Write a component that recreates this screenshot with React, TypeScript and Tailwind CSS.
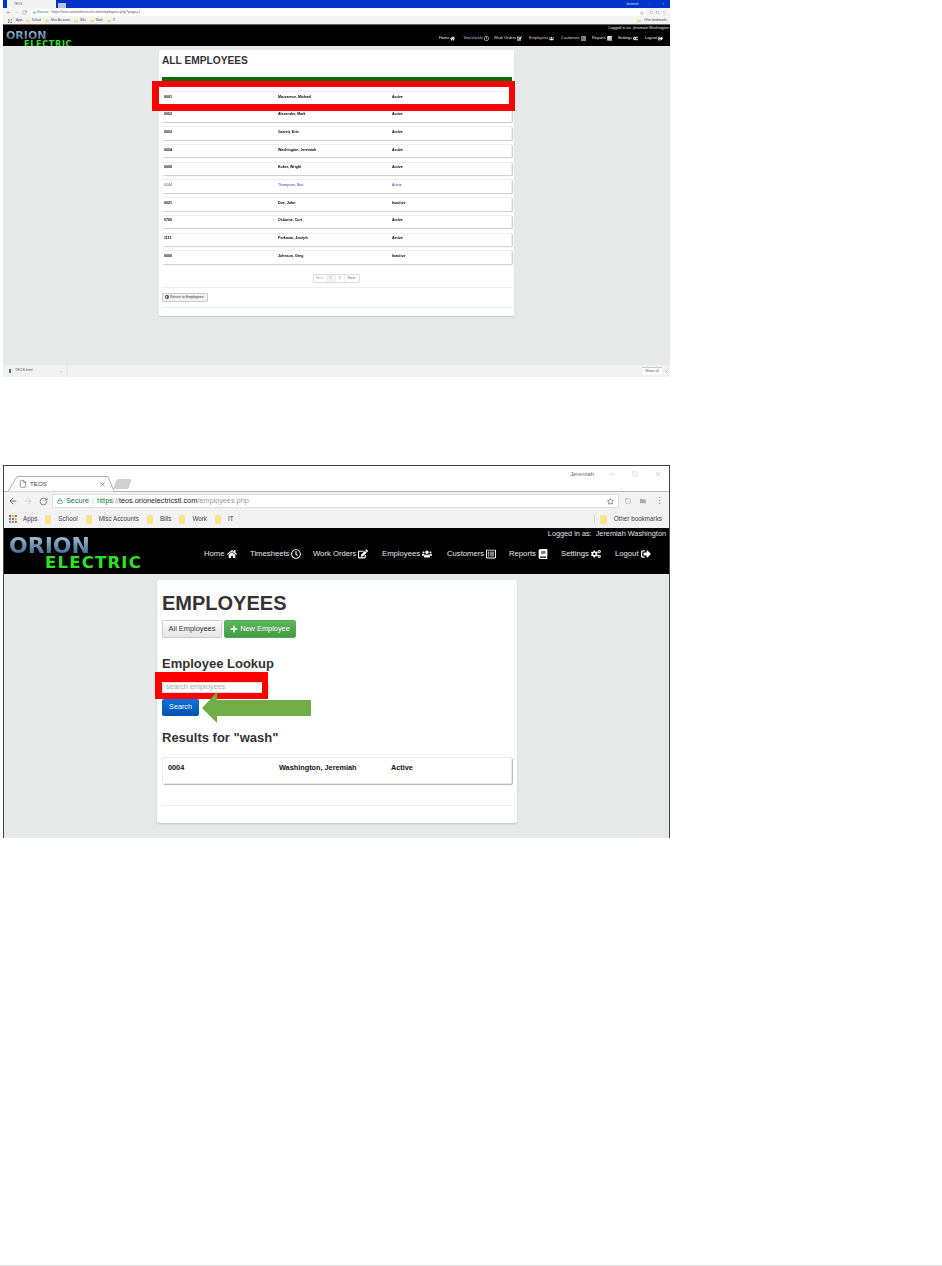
import { ArrowLeft, ArrowRight, RotateCw, Lock, Star, X, Minus, Square, File, ChevronUp } from 'lucide-react'
import { FaHome, FaRegClock, FaEdit, FaUsers, FaRegListAlt, FaBook, FaCogs, FaSignOutAlt, FaPlus, FaFolder, FaArrowCircleLeft } from 'react-icons/fa'

const navSmall = [
  { label: 'Home', icon: FaHome, w: 'w-[24px]', color: 'text-[#e8e8e8]' },
  { label: 'Timesheets', icon: FaRegClock, w: 'w-[31px]', color: 'text-[#a8c8ee]' },
  { label: 'Work Orders', icon: FaEdit, w: 'w-[35px]', color: 'text-[#eee0a8]' },
  { label: 'Employees', icon: FaUsers, w: 'w-[32px]', color: 'text-[#eec8a0]' },
  { label: 'Customers', icon: FaRegListAlt, w: 'w-[31px]', color: 'text-[#d8d8d8]' },
  { label: 'Reports', icon: FaBook, w: 'w-[26px]', color: 'text-[#eed8c0]' },
  { label: 'Settings', icon: FaCogs, w: 'w-[27px]', color: 'text-[#e8e8e8]' },
  { label: 'Logout', icon: FaSignOutAlt, w: 'w-[18px]', color: 'text-[#e8e8e8]' },
]

const navLarge = [
  { label: 'Home', icon: FaHome, w: 'w-[46px]' },
  { label: 'Timesheets', icon: FaRegClock, w: 'w-[63px]' },
  { label: 'Work Orders', icon: FaEdit, w: 'w-[69px]' },
  { label: 'Employees', icon: FaUsers, w: 'w-[65px]' },
  { label: 'Customers', icon: FaRegListAlt, w: 'w-[62px]' },
  { label: 'Reports', icon: FaBook, w: 'w-[52px]' },
  { label: 'Settings', icon: FaCogs, w: 'w-[54px]' },
  { label: 'Logout', icon: FaSignOutAlt, w: 'w-[40px]' },
]

const employees = [
  { id: '0001', name: 'Mazzarese, Michael', status: 'Active' },
  { id: '0002', name: 'Alexander, Mark', status: 'Active' },
  { id: '0003', name: 'Garrett, Eric', status: 'Active' },
  { id: '0004', name: 'Washington, Jeremiah', status: 'Active' },
  { id: '0009', name: 'Koker, Wright', status: 'Active' },
  { id: '0544', name: 'Thompson, Bart', status: 'Active', link: true },
  { id: '0021', name: 'Doe, John', status: 'Inactive' },
  { id: '0750', name: 'Osborne, Curt', status: 'Active' },
  { id: '1111', name: 'Parkman, Joseph', status: 'Active' },
  { id: '0000', name: 'Johnson, Greg', status: 'Inactive' },
]

const bookmarks = ['School', 'Misc Accounts', 'Bills', 'Work', 'IT']

function AppsGrid({ size }: { size: number }) {
  const colors = ['#ea4335', '#fbbc05', '#34a853', '#4285f4', '#ea4335', '#fbbc05', '#34a853', '#4285f4', '#ea4335']
  return (
    <svg width={size} height={size} viewBox="0 0 9 9">
      {colors.map((c, i) => (
        <rect key={i} x={(i % 3) * 3.3} y={Math.floor(i / 3) * 3.3} width="2.2" height="2.2" fill={c} />
      ))}
    </svg>
  )
}

function Logo({ big }: { big?: boolean }) {
  if (big) {
    return (
      <div className="w-[136px] h-[34px] flex flex-col shrink-0 font-['DejaVu_Sans',sans-serif] font-bold leading-none">
        <span className="text-[22px] h-[20px] text-transparent bg-clip-text bg-gradient-to-b from-[#a9c3e0] to-[#3f6590] w-[82px]">
          ORION
        </span>
        <span className="text-[16.5px] h-[14px] pl-[36px] tracking-[1.2px] text-[#2fe02a] whitespace-nowrap">ELECTRIC</span>
      </div>
    )
  }
  return (
    <div className="w-[68px] h-[17px] flex flex-col shrink-0 font-['DejaVu_Sans',sans-serif] font-bold leading-none">
      <span className="text-[11px] h-[9.5px] text-transparent bg-clip-text bg-gradient-to-b from-[#a9c3e0] to-[#3f6590] w-[41px]">
        ORION
      </span>
      <span className="text-[8.2px] h-[7.5px] pl-[18px] tracking-[0.6px] text-[#2fe02a] whitespace-nowrap">ELECTRIC</span>
    </div>
  )
}

function ScreenOne() {
  return (
    <div className="w-[667px] h-[377px] flex flex-col font-['Liberation_Sans',sans-serif]">
      {/* title bar */}
      <div className="h-[8px] bg-[#0033c8] flex items-end pl-[4px] shrink-0">
        <div className="w-[49px] h-[8px] bg-[#f2f2f2] flex items-center pl-[7px] text-[3px] text-[#555]">TEOS</div>
        <div className="w-[8px] h-[5px] ml-[2px] bg-[#b9c4dc]" />
        <div className="ml-auto h-[8px] flex items-center gap-[11px] pr-[6px] text-[3px] text-[#d8e0f8]">
          <span>Jeremiah</span>
          <span>–</span>
          <span>×</span>
        </div>
      </div>
      {/* toolbar */}
      <div className="h-[9px] bg-[#f4f4f4] flex items-center pl-[3px] pr-[4px] gap-[3px] text-[#777] shrink-0">
        <ArrowLeft size={5} />
        <ArrowRight size={5} className="text-[#ccc]" />
        <RotateCw size={5} />
        <div className="ml-[1px] flex-1 h-[7px] bg-white flex items-center pl-[2px] gap-[1px] text-[3.6px] whitespace-nowrap">
          <Lock size={3} className="text-[#0b8043]" />
          <span className="text-[#0b8043]">Secure</span>
          <span className="ml-[2px] text-[#555]">https://teos.orionelectricstl.com/employees.php?page=1</span>
          <Star size={4} className="ml-auto mr-[2px]" />
        </div>
        <Square size={3} className="ml-[1px]" />
        <Square size={3} />
        <span className="text-[4px]">⋮</span>
      </div>
      {/* bookmarks */}
      <div className="h-[7px] bg-[#f2f2f2] border-b border-[#666] box-content flex items-center pl-[5px] pr-[3px] gap-[2px] text-[3px] text-[#444] whitespace-nowrap shrink-0">
        <AppsGrid size={4} />
        <span className="ml-[2px] mr-[1px]">Apps</span>
        {bookmarks.map((b) => (
          <span key={b} className="flex items-center gap-[2px] mr-[2px]">
            <FaFolder size={4} className="text-[#f8dc8a]" />
            {b}
          </span>
        ))}
        <span className="ml-auto flex items-center gap-[3px]">
          <FaFolder size={4} className="text-[#f8dc8a]" />
          Other bookmarks
        </span>
      </div>
      {/* site header */}
      <div className="h-[21px] bg-black flex pl-[3px] pr-[1px] shrink-0">
        <div className="pt-[5px]">
          <Logo />
        </div>
        <div className="ml-auto flex flex-col items-end">
          <div className="text-[3.8px] leading-[5px] text-[#e4e4e4] whitespace-nowrap pt-[1px]">Logged in as: Jeremiah Washington</div>
          <div className="flex items-center mt-[4px] mr-[6px]">
            {navSmall.map((n) => (
              <span key={n.label} className={`flex items-center gap-[1px] text-[3.9px] leading-[6px] whitespace-nowrap blur-[0.2px] ${n.w} ${n.color}`}>
                {n.label}
                <n.icon size={5} className="text-white shrink-0" />
              </span>
            ))}
          </div>
        </div>
      </div>
      {/* page body */}
      <div className="flex-1 bg-[#e6e9e8] pl-[156px] pt-[4px] relative">
        <div className="w-[355px] h-[266px] bg-white rounded-[1px] shadow-[0_1px_1px_#c4c6c6] pl-[3px] pr-[2px] flex flex-col">
          <h1 className="text-[10.2px] leading-[13px] font-bold text-[#333] mt-[4px] whitespace-nowrap">ALL EMPLOYEES</h1>
          <div className="h-[4px] bg-[#0d6b0d] mt-[10px] shrink-0" />
          <div className="mt-[10px] flex flex-col gap-[4.3px]">
            {employees.map((e) => (
              <div
                key={e.id}
                className={`h-[13.4px] rounded-[1px] border-t border-r border-[#eee] shadow-[1px_1px_1px_#ccc] flex items-center pl-[2px] pb-[2px] text-[3.6px] font-bold whitespace-nowrap ${
                  e.link ? 'text-[#3a3fae] font-normal' : 'text-black'
                }`}
              >
                <span className="w-[114px] blur-[0.2px]">{e.id}</span>
                <span className="w-[114px] blur-[0.2px]">{e.name}</span>
                <span className="blur-[0.2px]">{e.status}</span>
              </div>
            ))}
          </div>
          <div className="mt-[10px] self-center flex h-[9px] border border-[#ddd] rounded-[1px] text-[3.6px] leading-[7px] ml-[-2px]">
            <span className="w-[13px] text-center text-[#aaa] border-r border-[#eee]">First</span>
            <span className="w-[9px] text-center text-[#aaa] bg-[#f2f2f2] border-r border-[#eee]">1</span>
            <span className="w-[9px] text-center text-[#337ab7] border-r border-[#eee]">2</span>
            <span className="w-[14px] text-center text-[#337ab7]">Next</span>
          </div>
          <div className="h-px bg-[#eee] mt-[4px] shrink-0" />
          <div className="mt-[5px] w-[46px] h-[9px] border border-[#ccc] rounded-[1px] bg-[#f2f2f2] flex items-center gap-[1px] pl-[2px] text-[3.6px] leading-[7px] text-[#333] whitespace-nowrap">
            <FaArrowCircleLeft size={4} className="shrink-0" />
            Return to Employees
          </div>
          <div className="h-px bg-[#eee] mt-[5px] shrink-0" />
        </div>
        {/* highlight */}
        <div className="absolute left-[149px] top-[35px] w-[363px] h-[30px] border-t-[6px] border-b-[7px] border-l-[7px] border-r-[6px] border-[#ff0000]" />
      </div>
      {/* download bar */}
      <div className="h-[12px] bg-[#f1f1f1] flex items-center pl-[6px] pr-[2px] text-[3.6px] text-[#556] shrink-0">
        <span className="w-[2px] h-[4px] bg-[#3f7f6a]" />
        <span className="ml-[4px] w-[45px]">TEOS.html</span>
        <ChevronUp size={3} />
        <span className="ml-[4px] h-[12px] w-px bg-[#e4e4e4]" />
        <span className="ml-auto w-[20px] h-[8px] bg-white border-t border-[#ccc] text-center leading-[7px]">Show all</span>
        <X size={3} className="ml-[3px]" />
      </div>
    </div>
  )
}

function ScreenTwo() {
  return (
    <div className="w-[667px] h-[373px] flex flex-col border-t border-x border-[#444] font-['Liberation_Sans',sans-serif]">
      {/* tab strip */}
      <div className="h-[26px] bg-white flex items-end pl-[4px] shrink-0 relative border-b border-[#b4b4b4]">
        <div className="relative w-[106px] h-[16px] -mb-px flex items-center pl-[11px] text-[6.2px] text-[#444]">
          <svg className="absolute left-0 top-0" width="106" height="16" viewBox="0 0 106 16">
            <path d="M0 15.5 L9 0.5 H100 L106 15.5" fill="#fff" stroke="#b0b0b0" />
          </svg>
          <File size={8} className="relative text-[#666]" />
          <span className="relative ml-[3px]">TEOS</span>
          <X size={7} className="relative ml-auto mr-[8px] text-[#555]" />
        </div>
        <div className="w-[15px] h-[10px] mb-[2px] ml-[1px] bg-[#d0d0d0] rounded-t-[2px] -skew-x-[20deg]" />
        <div className="absolute right-[7px] top-[4px] flex items-center gap-[16px] text-[#888]">
          <span className="text-[5.8px] text-[#666] -mr-[2px]">Jeremiah</span>
          <Minus size={8} strokeWidth={1} />
          <Square size={6} strokeWidth={1} />
          <X size={8} strokeWidth={1} />
        </div>
      </div>
      {/* toolbar */}
      <div className="h-[18px] bg-[#f2f2f2] flex items-center pl-[4px] pr-[5px] text-[#666] shrink-0">
        <ArrowLeft size={10} />
        <ArrowRight size={10} className="ml-[5px] text-[#c8c8c8]" />
        <RotateCw size={9} className="ml-[6px]" />
        <div className="ml-[4px] w-[567px] h-[14px] bg-white border border-[#ddd] flex items-center pl-[4px] text-[7.3px] whitespace-nowrap">
          <Lock size={6} className="text-[#0b8043]" />
          <span className="ml-[3px] text-[#0b8043]">Secure</span>
          <span className="ml-[3px] mr-[3px] text-[#ccc]">|</span>
          <span className="text-[#0b8043]">https</span>
          <span className="text-[#999]">://</span>
          <span className="text-[#222]">teos.orionelectricstl.com</span>
          <span className="text-[#999]">/employees.php</span>
          <Star size={7} className="ml-auto mr-[4px] text-[#444]" />
        </div>
        <Square size={6} className="ml-[6px] text-[#999]" />
        <FaFolder size={6} className="ml-[9px] text-[#aaa]" />
        <span className="ml-[9px] text-[9px] leading-none">⋮</span>
      </div>
      {/* bookmarks */}
      <div className="h-[18px] bg-[#f2f2f2] flex items-center pl-[5px] pr-[7px] text-[6.3px] text-[#444] whitespace-nowrap shrink-0">
        <AppsGrid size={8} />
        <span className="ml-[6px]">Apps</span>
        {bookmarks.map((b) => (
          <span key={b} className="flex items-center gap-[7px] ml-[8px]">
            <span className="w-[6px] h-[9px] bg-[#fbe08e] rounded-[1px]" />
            {b}
          </span>
        ))}
        <span className="ml-auto h-[9px] w-px bg-[#d8d8d8]" />
        <span className="ml-[5px] w-[7px] h-[9px] bg-[#fbe08e] rounded-[1px]" />
        <span className="ml-[7px]">Other bookmarks</span>
      </div>
      {/* site header */}
      <div className="h-[46px] bg-black flex pl-[5px] pr-[3px] shrink-0">
        <div className="pt-[7px]">
          <Logo big />
        </div>
        <div className="flex-1 flex flex-col items-end">
          <div className="text-[7.3px] leading-[10px] text-[#dfe7ef] whitespace-nowrap mt-[1px]">Logged in as:&nbsp; Jeremiah Washington</div>
          <div className="flex items-center self-start ml-[59px] mt-[9px]">
            {navLarge.map((n) => (
              <span key={n.label} className={`flex items-center shrink-0 gap-[2px] text-[7.7px] leading-[12px] text-[#e6e8ea] whitespace-nowrap ${n.w}`}>
                {n.label}
                <n.icon size={10} className="text-white shrink-0" />
              </span>
            ))}
          </div>
        </div>
      </div>
      {/* page body */}
      <div className="flex-1 bg-[#e6e9e8] pl-[153px] pt-[6px] overflow-hidden relative">
        <div className="w-[360px] h-[243px] bg-white rounded-[3px] shadow-[0_1px_2px_#bfc1c1] pl-[5px] pr-[5px] flex flex-col">
          <h1 className="text-[20px] leading-[24px] font-bold text-[#333] mt-[11px]">EMPLOYEES</h1>
          <div className="flex gap-[2px] mt-[5px]">
            <div className="h-[18px] w-[60px] rounded-[2px] border border-[#ccc] bg-gradient-to-b from-white to-[#e4e4e4] flex items-center justify-center text-[7.4px] text-[#333]">
              All Employees
            </div>
            <div className="h-[18px] w-[72px] rounded-[2px] border border-[#4cae4c] bg-gradient-to-b from-[#5cb85c] to-[#459a45] flex items-center justify-center gap-[2px] text-[7.4px] text-white">
              <FaPlus size={8} />
              New Employee
            </div>
          </div>
          <h2 className="text-[13px] leading-[16px] font-bold text-[#333] mt-[18px]">Employee Lookup</h2>
          <div className="mt-[10px] w-[107px] h-[11px] border border-[#ddd] rounded-[1px] flex items-center pl-[3px] text-[7.3px] text-[#aaa]">
            search employees
          </div>
          <div className="mt-[6px] w-[37px] h-[17px] rounded-[2px] bg-gradient-to-b from-[#0a75d8] to-[#0550b0] flex items-center justify-center text-[7.2px] text-white">
            Search
          </div>
          <h2 className="text-[13px] leading-[16px] font-bold text-[#333] mt-[14px]">Results for "wash"</h2>
          <div className="mt-[11px] h-[27px] rounded-[2px] border border-[#e8e8e8] shadow-[1px_1px_1px_#b5b5b5] pl-[5px] pt-[5px] flex text-[7.3px] leading-[10px] font-bold text-[#111] whitespace-nowrap">
            <span className="w-[111px]">0004</span>
            <span className="w-[112px]">Washington, Jeremiah</span>
            <span>Active</span>
          </div>
          <div className="h-px bg-[#eee] mt-[21px] shrink-0" />
        </div>
        {/* highlight and arrow */}
        <div className="absolute left-[151px] top-[98px] w-[113px] h-[27px] border-t-[10px] border-b-[6px] border-l-[7px] border-r-[6px] border-[#ff0000]" />
        <svg className="absolute left-[198px] top-[118px]" width="110" height="31" viewBox="0 0 110 31">
          <path d="M0 16 L15 0 V8 H109 V24 H15 V31 Z" fill="#70ad47" />
        </svg>
      </div>
    </div>
  )
}

export default function App() {
  return (
    <div className="w-[942px] h-[1266px] bg-white flex flex-col overflow-hidden">
      <div className="pl-[3px]">
        <ScreenOne />
      </div>
      <div className="pl-[3px] mt-[88px]">
        <ScreenTwo />
      </div>
      <div className="mt-auto h-px bg-[#d9d9d9]" />
    </div>
  )
}
